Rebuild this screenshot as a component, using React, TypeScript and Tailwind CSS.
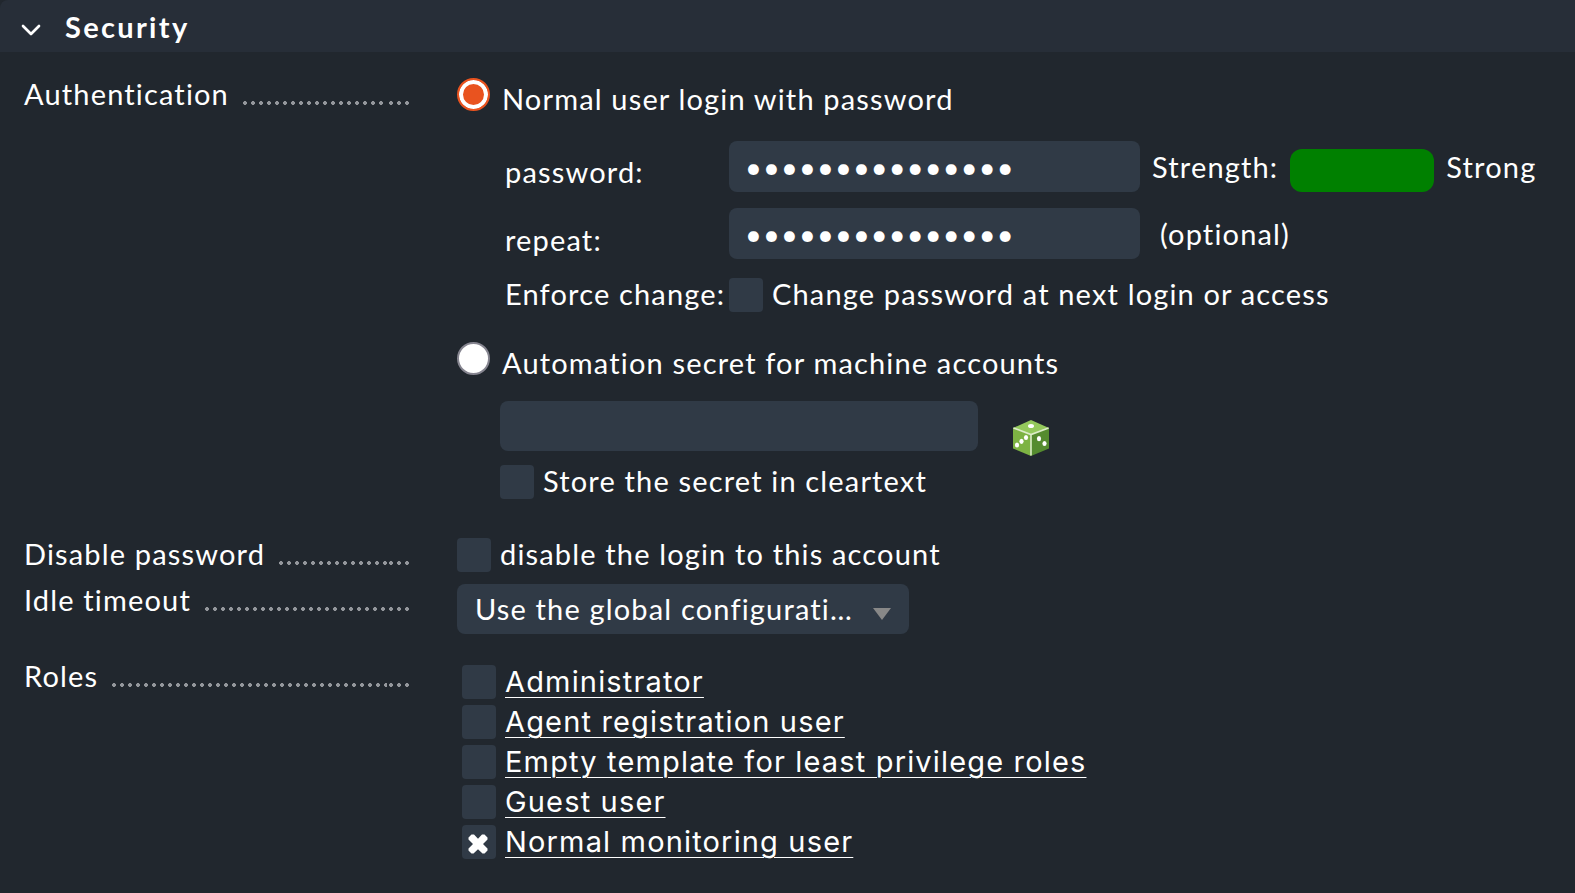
import React, { useState } from 'react';
import { ChevronDown } from 'lucide-react';

const FIELD = 'bg-[#303a46] rounded-[8px] text-white outline-none';

const ROLES = [
  'Administrator',
  'Agent registration user',
  'Empty template for least privilege roles',
  'Guest user',
  'Normal monitoring user',
];

const Dots: React.FC<{ className: string }> = ({ className }) => (
  <span
    className={`mb-[5px] h-1 bg-[radial-gradient(circle,#94979c_1.6px,transparent_2.2px)] bg-[length:8px_4px] ${className}`}
  />
);

const Row: React.FC<{ label: string; className?: string; children: React.ReactNode }> = ({ label, className = '', children }) => (
  <div className={`flex items-start gap-[46px] ${className}`}>
    <div className="flex w-[387px] shrink-0 items-end leading-8">
      <span>{label}</span>
      <Dots className="ml-3 flex-1" />
      <Dots className="w-6" />
    </div>
    <div className="min-w-0 flex-1">{children}</div>
  </div>
);

const Checkbox: React.FC<{ id: string; checked?: boolean }> = ({ id, checked = false }) => {
  const [on, setOn] = useState(checked);
  return (
    <span className="relative block h-[34px] w-[34px] shrink-0">
      <input
        id={id}
        type="checkbox"
        checked={on}
        onChange={() => setOn(!on)}
        className="block h-full w-full appearance-none rounded-[4px] bg-[#303a46]"
      />
      {on && (
        <svg className="pointer-events-none absolute inset-0 h-full w-full" viewBox="0 0 34 34">
          <path
            d="M9.5 9.5 L12 9.5 L16 13.8 L20 9.5 L22.5 9.5 L25.5 12.5 L25.5 14.5 L21 19 L25.5 23.5 L25.5 25.5 L22.5 28.5 L20.5 28.5 L16 24.2 L11.5 28.5 L9.5 28.5 L6.5 25.5 L6.5 23.5 L11 19 L6.5 14.5 L6.5 12.5 Z"
            fill="#fff"
          />
        </svg>
      )}
    </span>
  );
};

const Radio: React.FC<{ id: string; checked: boolean; onChange: () => void }> = ({ id, checked, onChange }) => (
  <input
    id={id}
    type="radio"
    name="auth"
    checked={checked}
    onChange={onChange}
    className="h-[33px] w-[33px] shrink-0 appearance-none rounded-full border-2 border-[#868590] bg-white checked:border-[#e9531f] checked:bg-[#e9531f] checked:shadow-[inset_0_0_0_4px_#fff]"
  />
);

const Dice = () => (
  <svg className="h-9 w-9" viewBox="0 0 36 36">
    <path d="M18 0 L36 8 L18 15 L0 8 Z" fill="#94c95c" />
    <path d="M0 8 L18 15 V36 L0 28.5 Z" fill="#7db343" />
    <path d="M36 8 L18 15 V36 L36 28.5 Z" fill="#558b2f" />
    <path d="M0.4 8 L18 14.6 L35.6 8 M18 14.6 V35.6" fill="none" stroke="#dcedc8" strokeWidth="1.6" />
    <ellipse cx="18" cy="6" rx="3" ry="2" fill="#fff" />
    <ellipse cx="13" cy="17.5" rx="2.1" ry="2.6" fill="#fff" />
    <ellipse cx="8.5" cy="21.3" rx="2.1" ry="2.6" fill="#fff" />
    <ellipse cx="4" cy="25" rx="2.1" ry="2.6" fill="#fff" />
    <ellipse cx="26" cy="18.7" rx="2.1" ry="2.6" fill="#fff" />
    <ellipse cx="31.5" cy="23.5" rx="2.1" ry="2.6" fill="#fff" />
  </svg>
);

const App: React.FC = () => {
  const [auth, setAuth] = useState('password');
  const [password, setPassword] = useState('monitoring-user');
  const [repeat, setRepeat] = useState('monitoring-user');
  const [secret, setSecret] = useState('');

  return (
    <div className="min-h-screen bg-[#21272e] font-['Lato',sans-serif] text-[29px] tracking-[0.04em] whitespace-nowrap text-white">
      <h1 className="rounded-tl-[8px] bg-[#272e38] font-bold">
        <button className="flex h-13 w-full items-center gap-[18px] pt-0.5 pl-[15px] tracking-[0.08em]">
          <ChevronDown className="mt-1.5 h-8 w-8" strokeWidth={2} />
          Security
        </button>
      </h1>

      <div className="px-6 pt-[26px]">
        <Row label="Authentication">
          <div className="flex items-start gap-3">
            <Radio id="auth-password" checked={auth === 'password'} onChange={() => setAuth('password')} />
            <label htmlFor="auth-password" className="leading-[42px]">Normal user login with password</label>
          </div>

          <div className="mt-[21px] ml-12 flex flex-col gap-4">
            <div className="flex h-[51px] items-center">
              <label htmlFor="password" className="w-56 pt-2.5 leading-10">password:</label>
              <input
                id="password"
                type="password"
                value={password}
                onChange={(e) => setPassword(e.target.value)}
                className={`h-[51px] w-[411px] px-4 ${FIELD}`}
              />
              <span className="ml-3">Strength:</span>
              <span className="mt-2 ml-3 h-[43px] w-36 rounded-[12px] bg-[#008000]" />
              <span className="ml-3">Strong</span>
            </div>
            <div className="flex h-[51px] items-center">
              <label htmlFor="repeat" className="w-56 pt-3 leading-10">repeat:</label>
              <input
                id="repeat"
                type="password"
                value={repeat}
                onChange={(e) => setRepeat(e.target.value)}
                className={`h-[51px] w-[411px] px-4 ${FIELD}`}
              />
              <span className="ml-5">(optional)</span>
            </div>
          </div>
          <div className="mt-[19px] ml-12 flex items-start leading-8">
            <span className="w-56">Enforce change:</span>
            <Checkbox id="enforce" />
            <label htmlFor="enforce" className="ml-[9px]">Change password at next login or access</label>
          </div>

          <div className="mt-[30px] flex items-start gap-3">
            <Radio id="auth-secret" checked={auth === 'secret'} onChange={() => setAuth('secret')} />
            <label htmlFor="auth-secret" className="leading-[42px]">Automation secret for machine accounts</label>
          </div>
          <div className="mt-[17px] ml-[43px] flex items-start">
            <input
              aria-label="Automation secret"
              type="text"
              value={secret}
              onChange={(e) => setSecret(e.target.value)}
              className={`h-[50px] w-[478px] px-4 ${FIELD}`}
            />
            <button aria-label="Create random secret" className="mt-[19px] ml-[35px] h-9">
              <Dice />
            </button>
          </div>
          <div className="mt-[9px] ml-[43px] flex items-start gap-[9px] leading-8">
            <Checkbox id="cleartext" />
            <label htmlFor="cleartext">Store the secret in cleartext</label>
          </div>
        </Row>

        <Row label="Disable password" className="mt-[39px]">
          <div className="flex items-start gap-[9px] leading-8">
            <Checkbox id="disable" />
            <label htmlFor="disable">disable the login to this account</label>
          </div>
        </Row>

        <Row label="Idle timeout" className="mt-3">
          <div className="relative w-[452px]">
            <select aria-label="Idle timeout" className={`block h-[50px] w-full appearance-none truncate pr-14 pl-[18px] tracking-[0.04em] ${FIELD}`}>
              <option>Use the global configurati...</option>
            </select>
            <svg className="pointer-events-none absolute top-6 right-[18px] h-3 w-[18px]" viewBox="0 0 18 12">
              <path d="M0 0 H18 L9 12 Z" fill="#888" />
            </svg>
          </div>
        </Row>

        <Row label="Roles" className="mt-[26px]">
          <ul className="mt-[5px] ml-[5px] flex flex-col gap-1.5 font-['Inter',sans-serif]">
            {ROLES.map((role, i) => (
              <li key={role} className="flex items-center gap-[9px] leading-[34px]">
                <Checkbox id={`role-${i}`} checked={role === 'Normal monitoring user'} />
                <a href="#" className="underline decoration-1 underline-offset-5">{role}</a>
              </li>
            ))}
          </ul>
        </Row>
      </div>
    </div>
  );
};

export default App;
